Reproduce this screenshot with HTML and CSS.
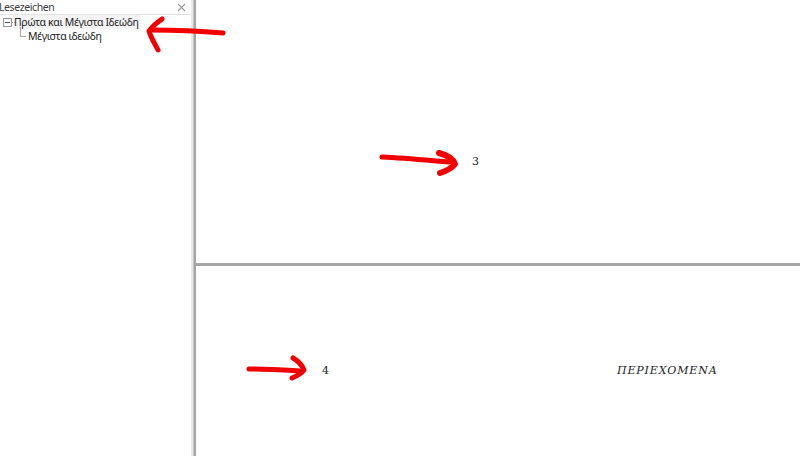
FILE: index.html
```html
<!DOCTYPE html>
<html>
<head>
<meta charset="utf-8">
<link rel="stylesheet" href="styles.css">
</head>
<body>
<div class="app">
  <aside class="panel">
    <div class="panel-head">
      <span class="panel-title">Lesezeichen</span>
      <svg class="panel-close" width="9" height="9" viewBox="0 0 9 9">
        <path d="M1 1 L8 8 M8 1 L1 8" stroke="#9a9a9a" stroke-width="1.1" fill="none"/>
      </svg>
    </div>
    <ul class="tree">
      <li class="node">
        <div class="row row-top">
          <span class="toggle"></span>
          <span class="label selected">Πρώτα και Μέγιστα Ιδεώδη</span>
        </div>
        <ul class="children">
          <li class="row row-child">
            <span class="elbow"></span>
            <span class="label">Μέγιστα ιδεώδη</span>
          </li>
        </ul>
      </li>
    </ul>
  </aside>
  <div class="splitter"></div>
  <main class="viewer">
    <section class="page page-top">
      <span class="pnum pnum-3">3</span>
    </section>
    <div class="page-gap"></div>
    <section class="page page-bottom">
      <div class="header-line">
        <span class="pnum pnum-4">4</span>
        <span class="running-head">ΠΕΡΙΕΧΟΜΕΝΑ</span>
      </div>
    </section>
  </main>
  <svg class="marks" width="800" height="456" viewBox="0 0 800 456">
    <g fill="none" stroke="#f20000" stroke-linecap="round" stroke-linejoin="round">
      <path d="M223 33 C200 31 178 30 151 30" stroke-width="5"/>
      <path d="M162 19 C156 23 152 27 149 31 C151 38 155 44 158 50" stroke-width="5"/>
      <path d="M382 157 C405 158 425 160 449 162" stroke-width="5"/>
      <path d="M439 153 C447 155 453 159 455 164 C452 168 446 171 440 173" stroke-width="6"/>
      <path d="M249 369 C265 369 282 370 300 371" stroke-width="5"/>
      <path d="M293 358 C298 361 302 365 304 370 C301 374 297 376 292 378" stroke-width="5"/>
    </g>
  </svg>
</div>
</body>
</html>
```

FILE: styles.css
```css
html, body {
  margin: 0;
  padding: 0;
  background: #ffffff;
}
.app {
  position: relative;
  width: 800px;
  height: 456px;
  display: flex;
  overflow: hidden;
  font-family: "Noto Sans", "Open Sans", sans-serif;
}
.panel {
  width: 191px;
  flex: none;
  background: #ffffff;
  display: flex;
  flex-direction: column;
}
.panel-head {
  height: 14px;
  display: flex;
  align-items: center;
  justify-content: space-between;
  border-bottom: 1px solid #e3e3e3;
  padding: 0 5px 0 0;
}
.panel-title {
  font-size: 10.5px;
  letter-spacing: -0.4px;
  color: #3c3c3c;
  line-height: 13px;
  margin-left: -1px;
}
.panel-close {
  display: block;
  margin-top: 1px;
}
.tree, .children {
  list-style: none;
  margin: 0;
  padding: 0;
}
.row {
  display: flex;
  align-items: center;
  height: 14px;
  font-size: 10.5px;
  letter-spacing: -0.4px;
  color: #222;
}
.row-top {
  padding-left: 3px;
  height: 14px;
}
.toggle {
  position: relative;
  width: 7px;
  height: 7px;
  border: 1px solid #9a9a9a;
  flex: none;
  margin-right: 0;
}
.toggle::before {
  content: "";
  position: absolute;
  left: 1px;
  right: 1px;
  top: 3px;
  height: 1px;
  background: #555;
}
.toggle::after {
  content: "";
  position: absolute;
  left: 8px;
  top: 3px;
  width: 3px;
  border-top: 1px dotted #9a9a9a;
}
.label {
  line-height: 14px;
  padding: 0 1px;
  white-space: nowrap;
}
.selected {
  background: #f3f3f3;
  margin-left: 1px;
}
.row-child {
  padding-left: 20px;
  height: 14px;
}
.elbow {
  width: 5px;
  height: 9px;
  margin-top: -8px;
  border-left: 1px solid #a8a8a8;
  border-bottom: 1px solid #a8a8a8;
  margin-right: 1px;
  flex: none;
}
.splitter {
  width: 5px;
  flex: none;
  background: linear-gradient(to right, #eeeeee 0, #e4e4e4 2px, #a6a6a6 3px, #a6a6a6 5px);
}
.viewer {
  flex: 1;
  display: flex;
  flex-direction: column;
  background: #ffffff;
}
.page {
  background: #ffffff;
  position: relative;
}
.page-top {
  height: 263px;
  display: flex;
  justify-content: flex-start;
}
.page-gap {
  height: 3px;
  background: #a6a6a6;
  flex: none;
}
.page-bottom {
  flex: 1;
}
.pnum, .running-head {
  font-family: "DejaVu Serif", "Liberation Serif", serif;
  font-size: 11px;
  color: #222;
}
.pnum-3 {
  margin: 155px 0 0 276px;
  height: 14px;
}
.header-line {
  display: flex;
  align-items: center;
  margin-top: 97px;
  padding-left: 126px;
  height: 14px;
}
.running-head {
  font-style: italic;
  margin-left: 288px;
  letter-spacing: 0.85px;
}
.marks {
  position: absolute;
  left: 0;
  top: 0;
  pointer-events: none;
}
```
